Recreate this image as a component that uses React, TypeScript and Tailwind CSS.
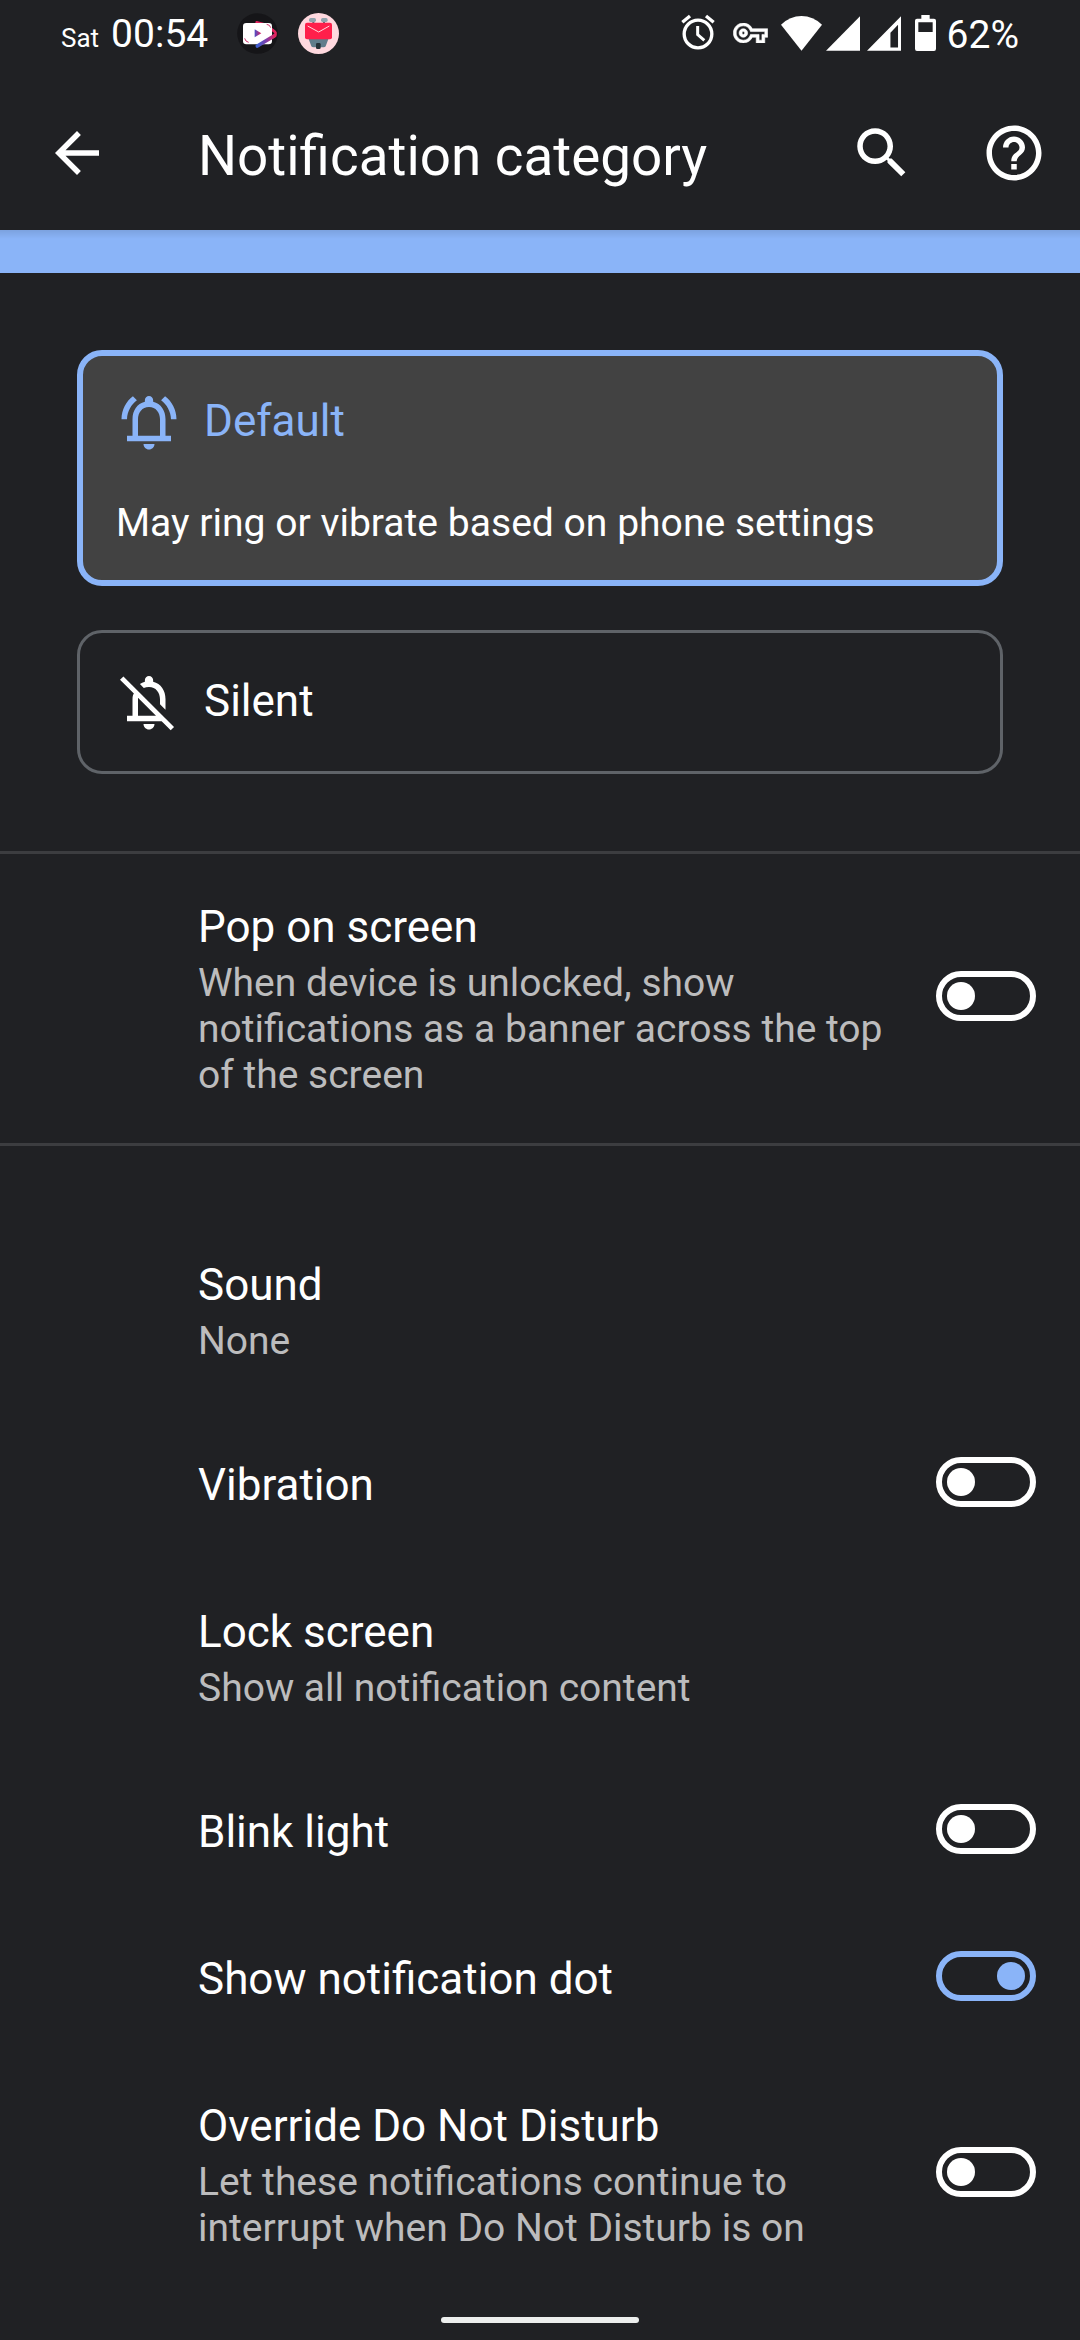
import type { ReactNode } from "react";

function Switch({ on = false, className }: { on?: boolean; className: string }) {
  return (
    <div
      role="switch"
      aria-checked={on}
      className={`flex h-[50px] w-[100px] shrink-0 items-center rounded-full border-[6px] px-[5px] ${
        on ? "justify-end border-[#8ab4f8]" : "justify-start border-white"
      } ${className}`}
    >
      <div className={on ? "size-7 rounded-full bg-[#8ab4f8]" : "size-7 rounded-full bg-white"} />
    </div>
  );
}

function StatusBar() {
  return (
    <div className="flex h-[66px] items-center pl-[61px] pr-[61px]">
      <div className="mt-[5px] flex w-[176px] items-baseline gap-[12px] whitespace-nowrap">
        <span className="text-[26px] leading-[46px]">Sat</span>
        <span className="text-[39px] leading-[46px]">00:54</span>
      </div>
      <svg className="size-[41px]" viewBox="591 36 123 123">
        <circle cx="652.500" cy="97.500" r="61" fill="#151518" />
        <path d="M650 64l38 10M686 78l18 14c5 4 3 12-3 15l-20 12" stroke="#e0245e" strokeWidth="8" fill="none" strokeLinecap="round" />
        <rect x="609" y="66" width="87" height="64" rx="10" fill="#fff" />
        <path d="M614 112q2 10 12 12M680 70q10 1 12 10" stroke="#d0356e" strokeWidth="3" fill="none" />
        <path d="M652 135L704 104" stroke="url(#pen)" strokeWidth="11" strokeLinecap="round" />
        <path d="M644 85l20 12-20 12z" fill="url(#tri)" />
        <defs>
          <linearGradient id="pen" x1="0" x2="1">
            <stop offset="0" stopColor="#3d5fd0" />
            <stop offset=".5" stopColor="#7a3fae" />
            <stop offset="1" stopColor="#e0245e" />
          </linearGradient>
          <linearGradient id="tri" x1="0" x2="1">
            <stop offset="0" stopColor="#4a4fc8" />
            <stop offset="1" stopColor="#e0245e" />
          </linearGradient>
        </defs>
      </svg>
      <svg className="ml-[20px] size-[41px]" viewBox="774 36 123 123">
        <circle cx="835.500" cy="97.500" r="61.500" fill="#ffd9df" />
        <path d="M820 60v8M852 60v8" stroke="#546e7a" strokeWidth="6" />
        <rect x="807" y="51" width="21" height="12" rx="5" fill="#90a4ae" />
        <rect x="843" y="51" width="20" height="12" rx="5" fill="#90a4ae" />
        <path d="M805 112h61l-9 24q-2 3-6 3h-31q-4 0-6-3z" fill="#607d8b" />
        <rect x="828" y="126" width="14" height="18" rx="4" fill="#263238" />
        <rect x="795" y="65" width="81" height="50" rx="6" fill="#ff1f4b" />
        <path d="M803 75l33 18 32-18" stroke="#ffd9df" strokeWidth="3" fill="none" />
      </svg>
      <div className="ml-auto flex items-center">
        <svg className="h-9 w-[34px] -translate-y-px" viewBox="58 42 102 108" fill="none" stroke="#fff">
          <circle cx="109" cy="102" r="41.500" strokeWidth="10" />
          <path d="M62 67l23-19M156 67l-23-19" strokeWidth="10" />
          <path d="M108 78v26l20 17" strokeWidth="9" />
        </svg>
        <svg className="ml-[18px] h-5 w-[35px]" viewBox="0 5 24 14" fill="#fff" stroke="#fff" strokeWidth="0.400">
          <path d="M22 19h-6v-4h-2.680c-1.140 2.420-3.600 4-6.320 4-3.860 0-7-3.140-7-7s3.140-7 7-7c2.720 0 5.170 1.580 6.320 4H24v6h-2v4zm-4-2h2v-4h2v-2H11.940l-.230-.670C11.010 8.340 9.110 7 7 7c-2.760 0-5 2.240-5 5s2.240 5 5 5c2.110 0 4.010-1.340 4.710-3.330l.230-.670H18v4zM7 15c-1.650 0-3-1.350-3-3s1.350-3 3-3 3 1.350 3 3-1.350 3-3 3zm0-4c-.550 0-1 .450-1 1s.450 1 1 1 1-.450 1-1-.450-1-1-1z" />
        </svg>
        <svg className="ml-[13px] h-[35px] w-[41px]" viewBox="360 45 123 105" fill="#fff">
          <path d="M421.500 149L360 71q27-26 61.500-26T483 71z" />
        </svg>
        <svg className="ml-[4px] h-[35px] w-[34px]" viewBox="494 45 103 105" fill="#fff">
          <path d="M494 150L597 45v105z" />
        </svg>
        <svg className="ml-[7px] h-[35px] w-[34px]" viewBox="616 45 103 105" fill="#fff">
          <path fillRule="evenodd" d="M616 150L719 45v105zM687 95v45h23V71z" />
        </svg>
        <svg className="ml-[14px] h-9 w-[21px]" viewBox="762 45 63 108" fill="#fff">
          <path
            fillRule="evenodd"
            d="M781 45h25v11h13q6 0 6 6v84q0 7-6 7h-51q-6 0-6-7V62q0-6 6-6h13zM772 67v29h43V67z"
          />
        </svg>
        <span className="ml-[11px] mt-[4px] text-[39px] leading-[46px]">62%</span>
      </div>
    </div>
  );
}

function MaterialIcon({ d, className }: { d: string; className?: string }) {
  return (
    <svg viewBox="0 0 24 24" fill="currentColor" className={`size-[66px] shrink-0 ${className ?? ""}`}>
      <path d={d} />
    </svg>
  );
}

function AppBar() {
  return (
    <header className="flex h-[164px] items-start pl-[44px] pr-[33px] pt-[54px]">
      <MaterialIcon d="M20 11H7.830l5.590-5.590L12 4l-8 8 8 8 1.410-1.410L7.830 13H20v-2z" />
      <h1 className="ml-[88px] mt-[3px] flex-1 text-[54.8px] leading-[66px]">Notification category</h1>
      <MaterialIcon d="M15.500 14h-.790l-.280-.270C15.410 12.590 16 11.110 16 9.500 16 5.910 13.090 3 9.500 3S3 5.910 3 9.500 5.910 16 9.500 16c1.610 0 3.090-.590 4.230-1.570l.270.280v.790l5 4.990L20.490 19l-4.990-5zm-6 0C7.010 14 5 11.990 5 9.500S7.010 5 9.500 5 14 7.010 14 9.500 11.990 14 9.500 14z" />
      <MaterialIcon
        className="ml-[66px]"
        d="M11 18h2v-2h-2v2zm1-16C6.480 2 2 6.480 2 12s4.480 10 10 10 10-4.480 10-10S17.520 2 12 2zm0 18c-4.410 0-8-3.590-8-8s3.590-8 8-8 8 3.590 8 8-3.590 8-8 8zm0-14c-2.210 0-4 1.790-4 4h2c0-1.100.9-2 2-2s2 .9 2 2c0 2-3 1.750-3 5h2c0-2.250 3-2.500 3-5 0-2.210-1.790-4-4-4z"
      />
    </header>
  );
}

const BELL =
  "M12 22c1.100 0 2-.9 2-2h-4c0 1.100.9 2 2 2zM18 17v-6c0-3.070-1.630-5.640-4.500-6.320V4c0-.830-.670-1.500-1.500-1.500s-1.500.670-1.500 1.500v.680C7.640 5.360 6 7.920 6 11v6H4v2h16v-2h-2zm-2 0H8v-6c0-2.480 1.510-4.500 4-4.500s4 2.020 4 4.500v6zM7.600 4.100L6.150 2.650C3.700 4.500 2.050 7.400 2 11h2c.1-2.900 1.500-5.300 3.600-6.900zM20 11h2c-.050-3.600-1.700-6.500-4.150-8.350L16.400 4.100C18.500 5.700 19.900 8.100 20 11z";

const BELL_OFF =
  "M12 22c1.100 0 2-.9 2-2h-4c0 1.100.9 2 2 2zM12 6.500c2.490 0 4 2.020 4 4.500v1.800l2 2V11c0-3.070-1.630-5.640-4.500-6.320V4c0-.830-.670-1.500-1.500-1.500s-1.500.670-1.500 1.500v.680c-.7.170-1.300.450-1.800.8l1.400 1.400c.550-.250 1.200-.380 1.900-.380zM1.450 3.900l1.250-1.200 18.400 18.400-1.200 1.200L16.600 19H4v-2h2v-6c0-.9.200-1.700.5-2.050zM8 10.450V17h6.550z";

type SettingProps = {
  title: string;
  summary?: ReactNode;
  control?: ReactNode;
  className: string;
};

function Setting({ title, summary, control, className }: SettingProps) {
  return (
    <div className={`flex shrink-0 items-start pl-[198px] pr-[44px] ${className}`}>
      <div className="flex-1 pt-[47px]">
        <div className="text-[44px] leading-[52px]">{title}</div>
        {summary && <div className="mt-[7px] whitespace-nowrap text-[39px] leading-[46px] text-[#bcbcbd]">{summary}</div>}
      </div>
      {control}
    </div>
  );
}

export default function App() {
  return (
    <div className="flex h-[2340px] w-[1080px] flex-col overflow-hidden bg-[#202124] font-['Roboto',sans-serif] text-white">
      <StatusBar />
      <AppBar />
      <div className="h-[43px] shrink-0 bg-[#8ab4f8] bg-[linear-gradient(to_bottom,rgba(0,0,0,0.1),transparent_9px)]" />

      <div className="mx-[77px] mt-[77px] h-[236px] shrink-0 rounded-[25px] border-[6px] border-[#8ab4f8] bg-[#424242] px-[33px] pt-[33px]">
        <div className="flex items-start gap-[22px] text-[#8ab4f8]">
          <MaterialIcon d={BELL} />
          <span className="mt-[6px] text-[44px] leading-[52px]">Default</span>
        </div>
        <div className="mt-[45px] text-[39.1px] leading-[46px]">May ring or vibrate based on phone settings</div>
      </div>
      <div className="mx-[77px] mt-[44px] flex h-[144px] shrink-0 items-start gap-[22px] rounded-[25px] border-[3px] border-[#5f6368] px-[36px] pt-[36px]">
        <MaterialIcon d={BELL_OFF} />
        <span className="mt-[6px] text-[44px] leading-[52px]">Silent</span>
      </div>

      <div className="mt-[77px] h-[3px] shrink-0 bg-[#3c3d40]" />
      <Setting
        className="h-[289px]"
        title="Pop on screen"
        summary={<>When device is unlocked, show<br />notifications as a banner across the top<br />of the screen</>}
        control={<Switch className="mt-[117px]" />}
      />
      <div className="h-[3px] shrink-0 bg-[#3c3d40]" />

      <Setting className="mt-[66px] h-[200px]" title="Sound" summary="None" />
      <Setting className="h-[147px]" title="Vibration" control={<Switch className="mt-[45px]" />} />
      <Setting className="h-[200px]" title="Lock screen" summary="Show all notification content" />
      <Setting className="h-[147px]" title="Blink light" control={<Switch className="mt-[45px]" />} />
      <Setting className="h-[147px]" title="Show notification dot" control={<Switch on className="mt-[45px]" />} />
      <Setting
        className="h-[246px]"
        title="Override Do Not Disturb"
        summary={<>Let these notifications continue to<br />interrupt when Do Not Disturb is on</>}
        control={<Switch className="mt-[94px]" />}
      />
      <div className="mx-auto mb-[17px] mt-auto h-[6px] w-[198px] shrink-0 rounded-full bg-[#eceeed]" />
    </div>
  );
}
